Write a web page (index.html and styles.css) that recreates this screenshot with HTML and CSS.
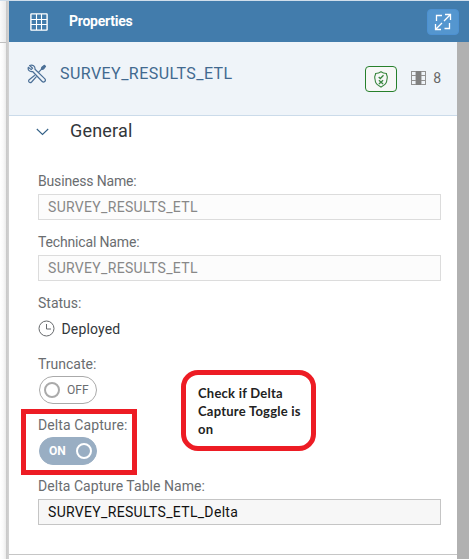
FILE: index.html
```html
<!DOCTYPE html>
<html lang="en">
<head>
<meta charset="utf-8">
<title>Properties</title>
<link rel="stylesheet" href="styles.css">
</head>
<body>
<div class="app">
  <div class="canvas-edge"><div class="edge-head"></div></div>
  <main class="panel">
    <header class="titlebar">
      <svg class="grid-icon" width="18" height="18" viewBox="0 0 18 18" fill="none" stroke="#fff" stroke-width="1.1"><rect x=".9" y=".9" width="16.2" height="16.2" rx=".5" stroke-width="1.4"/><path d="M6.5 1v16M11.5 1v16M1 6.5h16M1 11.5h16"/></svg>
      <h1>Properties</h1>
      <button class="expand" aria-label="Expand"><svg width="18" height="18" viewBox="0 0 18 18" fill="none" stroke="#fff" stroke-width="1.3"><path d="M2.500 8V2.500H8M10.500 15.500h5V10M10 8l6-6M11 1.500h5.500V7M8 10l-6 6M1.500 11v5.500H7"/></svg></button>
    </header>
    <div class="content">
      <div class="body">
        <section class="object">
          <svg class="tools" width="20" height="20" viewBox="0 0 20 20" fill="none" stroke="#4b6f97" stroke-width="1.200" stroke-linejoin="round"><path d="M2.600 1.500 5.600 4.200 4.200 5.600 1.300 3.300C.6 6 2.600 8.200 5.600 7.500l9.600 10c1.600 1.600 4.200-.8 2.700-2.600L8 5.300C8.400 2.300 5.600.200 2.600 1.500zM7.800 11.200l-5.600 4.500c-1.700 1.800.7 4 2.400 2.300l4.800-5.300M11.700 8.200l3.200-3.300"/><path d="m14.300 5.200.6-2L17.500 1.300l1 1-1.900 2.600-1.700.6z" fill="#4b6f97"/></svg>
          <h2>SURVEY_RESULTS_ETL</h2>
          <span class="shield"><svg width="14" height="17" viewBox="0 0 14 17" fill="none" stroke="#3c8740" stroke-width="1.100"><path d="M7 .8C5.500 2 3.500 2.500 1.600 2.500c.2 1.200-.9 2-.9 3.500 0 2 .6 2.500.6 4 0 2.900 2.800 4.400 5.700 6 2.900-1.600 5.700-3.100 5.700-6 0-1.500.6-2 .6-4 0-1.500-1.100-2.300-.9-3.500C10.500 2.500 8.500 2 7 .8z"/><path d="m4.700 6 1.600 1.500 3.200-3.300M4.900 9.300l4.200 3.700M9.100 9.300 4.900 13" stroke-width="1.300"/></svg></span>
          <svg class="columns" width="15" height="14" viewBox="0 0 15 14"><path fill="#929292" d="M0 0h15v14H0z"/><path fill="#808080" d="M5 0h5v14H5z"/><path fill="#eff4f9" d="M1 1h3.500v3H1zM1 5h3.500v4H1zM1 10h3.500v3H1zM10.500 1H14v3h-3.500zM10.500 5H14v4h-3.500zM10.500 10H14v3h-3.500z"/></svg>
          <span class="count">8</span>
        </section>
        <div class="section-head">
          <svg width="13" height="8" viewBox="0 0 13 8" fill="none" stroke="#346187" stroke-width="1.100"><path d="m.8 1 5.700 5.500L12.200 1"/></svg>
          <h3>General</h3>
        </div>
        <section class="form">
          <div class="field"><label class="tight">Business Name:</label><div class="input readonly"><span>SURVEY_RESULTS_ETL</span></div></div>
          <div class="field"><label class="tight">Technical Name:</label><div class="input readonly"><span>SURVEY_RESULTS_ETL</span></div></div>
          <div class="field"><label>Status:</label>
            <div class="status"><svg width="17" height="17" viewBox="0 0 17 17" fill="none" stroke="#66696c" stroke-width="1"><circle cx="8.500" cy="8.500" r="7.500"/><path d="M8.500 4v5H13"/></svg><span>Deployed</span></div></div>
          <div class="field"><label>Truncate:</label><div class="toggle off"><i></i><span>OFF</span></div></div>
          <div class="field"><label class="loose">Delta Capture:</label><div class="toggle on"><span>ON</span><i></i></div></div>
          <div class="field"><label class="table-label">Delta Capture Table Name:</label><div class="input"><span>SURVEY_RESULTS_ETL_Delta</span></div></div>
        </section>
        <div class="section-end"></div>
      </div>
      <div class="scrollbar"></div>
    </div>
  </main>
  <div class="highlight"></div>
  <div class="callout"><span>Check if Delta<br>Capture Toggle is<br>on</span></div>
</div>
</body>
</html>
```
FILE: styles.css
```css
* { box-sizing: border-box; }
body { margin: 0; overflow: hidden; font-family: Roboto, "Liberation Sans", sans-serif; }
h1, h2, h3 { margin: 0; white-space: nowrap; }
svg { display: block; flex: none; }
.app { position: relative; display: flex; width: 469px; height: 559px; border-top: 1px solid #d0deeb; }
.canvas-edge { width: 9px; background: linear-gradient(90deg, #fff 0, #fafafa 3px, #ececec 6px, #c8c8c8 6px, #d3d3d3 9px); }
.edge-head { width: 6px; height: 42px; border-bottom: 1px solid #bfbfbf; background: linear-gradient(90deg, #fafafa, #eaeaea); }
.panel { flex: 1; display: flex; flex-direction: column; background: #fff; }
.titlebar { height: 41px; flex: none; display: flex; align-items: center; background: #427cac; color: #fff; padding: 0 10px 0 21px; }
.titlebar h1 { margin: -1px 0 0 21px; font-size: 14px; font-weight: 700; letter-spacing: -.25px; }
.expand { margin-left: auto; width: 32px; height: 26px; display: flex; align-items: center; justify-content: center; padding: 0; border: 1px solid #4d91d2; border-radius: 4px; background: #5496cf; }
.content { flex: 1; display: flex; min-height: 0; }
.body { width: 448px; }
.scrollbar { width: 12px; background: #b1b1b1; }
.object { height: 74px; display: flex; padding: 0 16px 0 18px; background: #eff4f9; border-bottom: 1px solid #cbdbea; }
.tools { margin-top: 22px; }
.object h2 { margin: 21px 0 0 13px; font-size: 16px; line-height: 22px; font-weight: 400; letter-spacing: .45px; color: #41698f; }
.shield { margin: 24px 0 0 auto; width: 32px; height: 26px; display: flex; align-items: center; justify-content: center; border: 1px solid #27802c; border-radius: 4px; background: #f7f7f7; }
.columns { margin: 29px 0 0 14px; }
.count { margin: 27px 0 0 7px; font-size: 14px; line-height: 18px; color: #666; }
.section-head { display: flex; align-items: center; height: 32px; padding-left: 27px; }
.section-head h3 { margin: -3px 0 0 21px; font-size: 18px; font-weight: 400; letter-spacing: .2px; color: #32363a; }
.form { padding: 24px 16px 0 29px; }
.field { height: 61px; }
.field label { display: block; width: max-content; height: 18px; margin-bottom: 4px; font-size: 14px; line-height: 18px; color: #6a6d70; white-space: nowrap; }
.field .tight { letter-spacing: -.16px; }
.field .loose { letter-spacing: .1px; }
.field .table-label { letter-spacing: .04px; }
.input { width: 403px; height: 26px; padding-left: 9px; border: 1px solid #c5c5c5; background: #f7f7f7; color: #111; font-size: 14px; line-height: 25px; letter-spacing: .32px; }
.readonly { border-color: #dcdcdc; background: #fcfcfc; color: #888; }
.status { display: flex; align-items: center; height: 26px; gap: 7px; font-size: 14px; letter-spacing: .15px; color: #32363a; }
.status svg { margin: -2px 0 0 -.5px; }
.toggle { display: flex; align-items: center; width: 58px; height: 28px; margin: -1px 0 0 1px; border: 1px solid #aaa; border-radius: 14px; font-size: 12px; }
.toggle i { width: 16px; height: 16px; border: 2px solid #aaa; border-radius: 50%; }
.off { padding-left: 4px; color: #6a6d70; }
.off span { margin-left: 7px; }
.on { justify-content: space-between; padding: 0 4px 0 9px; border-color: #99aec3; background: #99aec3; color: #fff; font-weight: 700; }
.on i { border-color: #fff; }
.section-end { margin-top: 16px; border-top: 1px solid #c6c6c6; }
.highlight { position: absolute; left: 21px; top: 408px; width: 116px; height: 66px; border: 5px solid #ed1c24; }
.callout { position: absolute; left: 181px; top: 369px; width: 135px; height: 81px; padding: 9px 0 0 12px; border: 5px solid #ed1c24; border-radius: 17px; background: #fff; color: #222; font: 700 13px/18px Lato, "Open Sans", sans-serif; letter-spacing: .24px; white-space: nowrap; }
```
